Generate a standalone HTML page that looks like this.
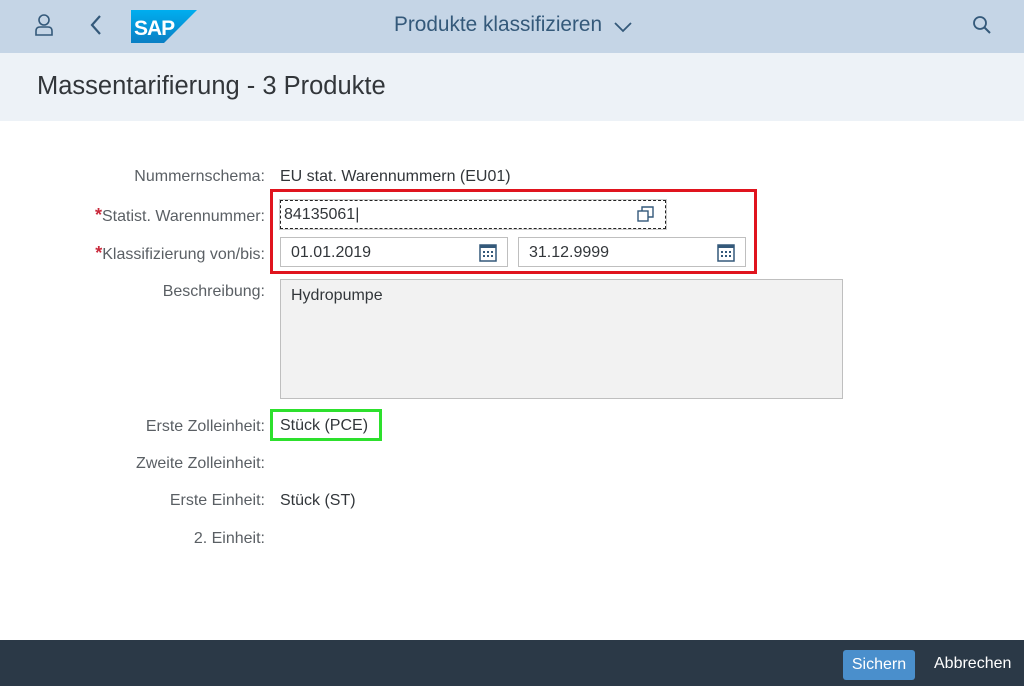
<!DOCTYPE html>
<html><head><meta charset="utf-8"><style>
*{box-sizing:border-box;margin:0;padding:0}
body{width:1024px;height:686px;overflow:hidden;background:#fff;font-family:"Liberation Sans",sans-serif;position:relative;color:#32363a}
.hdr{position:absolute;left:0;top:0;width:1024px;height:53px;background:#c5d5e6}
.sub{position:absolute;left:0;top:53px;width:1024px;height:68px;background:#edf2f7}
.title{position:absolute;left:37px;top:72px;font-size:25.5px;color:#32363a}
.ht{position:absolute;left:394px;top:13px;font-size:20.8px;color:#34597a}
.lbl{position:absolute;right:759px;font-size:16px;color:#5a5f64;text-align:right;white-space:nowrap}
.val{position:absolute;left:280px;font-size:16px;color:#32363a}
.star{color:#c9293b;font-size:18px;font-weight:bold}
.inp{position:absolute;background:#fff;border:1px solid #bfbfbf;font-size:16px;padding-left:10px;line-height:29px}
.foot{position:absolute;left:0;top:640px;width:1024px;height:46px;background:#2b3947}
</style></head><body>
<div class="hdr"></div>
<svg style="position:absolute;left:34px;top:13px" width="20" height="24" viewBox="0 0 20 24"><circle cx="10" cy="7" r="5" fill="none" stroke="#34597a" stroke-width="1.6"/><path d="M2 22 V18 Q2 14 6 14 H14 Q18 14 18 18 V22 Z" fill="none" stroke="#34597a" stroke-width="1.6"/></svg>
<svg style="position:absolute;left:89px;top:14px" width="14" height="22"><path d="M11 2 L3 11 L11 20" fill="none" stroke="#34597a" stroke-width="2.2"/></svg>
<svg style="position:absolute;left:131px;top:10px" width="66" height="33"><defs><linearGradient id="g" x1="0" y1="0" x2="0" y2="1"><stop offset="0" stop-color="#00aeef"/><stop offset="1" stop-color="#0a7fc4"/></linearGradient></defs><path d="M0 0 H66 L33 33 H0 Z" fill="url(#g)"/><text x="3" y="25" font-family="Liberation Sans" font-weight="bold" font-size="21" fill="#fff" letter-spacing="-1">SAP</text></svg>
<div class="ht">Produkte klassifizieren</div>
<svg style="position:absolute;left:613px;top:20px" width="20" height="14"><path d="M2 3 L10 11 L18 3" fill="none" stroke="#34597a" stroke-width="1.8"/></svg>
<svg style="position:absolute;left:972px;top:15px" width="20" height="20"><circle cx="8" cy="8" r="6" fill="none" stroke="#34597a" stroke-width="1.8"/><path d="M12.5 12.5 L18 18" stroke="#34597a" stroke-width="2"/></svg>
<div class="sub"></div>
<div class="title">Massentarifierung - 3 Produkte</div>

<div class="lbl" style="top:168px">Nummernschema:</div>
<div class="val" style="top:168px">EU stat. Warennummern (EU01)</div>
<div class="lbl" style="top:205px"><span class="star">*</span>Statist. Warennummer:</div>
<div class="lbl" style="top:243px"><span class="star">*</span>Klassifizierung von/bis:</div>
<div style="position:absolute;left:270px;top:189px;width:487px;height:85px;border:3px solid #e0141e"></div>
<div class="inp" style="left:280px;top:200px;width:386px;height:29px;border:1.5px dashed #222;outline:1px solid #ccc;padding-left:3px;line-height:27px">84135061|</div>
<svg style="position:absolute;left:637px;top:205px" width="18" height="18"><rect x="1" y="6" width="10" height="10" fill="none" stroke="#34597a" stroke-width="1.4"/><path d="M5 6 V2 H16 V12 H11" fill="none" stroke="#34597a" stroke-width="1.4"/></svg>
<div class="inp" style="left:280px;top:237px;width:228px;height:30px">01.01.2019</div>
<div class="inp" style="left:518px;top:237px;width:228px;height:30px">31.12.9999</div>
<svg style="position:absolute;left:479px;top:242px" width="18" height="20"><rect x="1" y="3" width="16" height="16" fill="none" stroke="#34597a" stroke-width="1.5"/><rect x="1" y="3" width="16" height="3" fill="#34597a"/><g fill="#34597a"><rect x="4" y="9" width="2" height="2"/><rect x="8" y="9" width="2" height="2"/><rect x="12" y="9" width="2" height="2"/><rect x="4" y="13" width="2" height="2"/><rect x="8" y="13" width="2" height="2"/><rect x="12" y="13" width="2" height="2"/></g></svg>
<svg style="position:absolute;left:717px;top:242px" width="18" height="20"><rect x="1" y="3" width="16" height="16" fill="none" stroke="#34597a" stroke-width="1.5"/><rect x="1" y="3" width="16" height="3" fill="#34597a"/><g fill="#34597a"><rect x="4" y="9" width="2" height="2"/><rect x="8" y="9" width="2" height="2"/><rect x="12" y="9" width="2" height="2"/><rect x="4" y="13" width="2" height="2"/><rect x="8" y="13" width="2" height="2"/><rect x="12" y="13" width="2" height="2"/></g></svg>

<div class="lbl" style="top:283px">Beschreibung:</div>
<div style="position:absolute;left:280px;top:279px;width:563px;height:120px;background:#f2f2f2;border:1px solid #bfbfbf;padding:7px 10px;font-size:16px">Hydropumpe</div>

<div class="lbl" style="top:418px">Erste Zolleinheit:</div>
<div style="position:absolute;left:270px;top:409px;width:112px;height:32px;border:3px solid #2de02d"></div>
<div class="val" style="top:417px">Stück (PCE)</div>
<div class="lbl" style="top:455px">Zweite Zolleinheit:</div>
<div class="lbl" style="top:492px">Erste Einheit:</div>
<div class="val" style="top:492px">Stück (ST)</div>
<div class="lbl" style="top:530px">2. Einheit:</div>

<div class="foot"></div>
<div style="position:absolute;left:843px;top:650px;width:72px;height:30px;background:#4a8fcc;border-radius:3px;color:#fff;font-size:16px;text-align:center;line-height:30px">Sichern</div>
<div style="position:absolute;left:934px;top:655px;color:#fff;font-size:16px">Abbrechen</div>
</body></html>
